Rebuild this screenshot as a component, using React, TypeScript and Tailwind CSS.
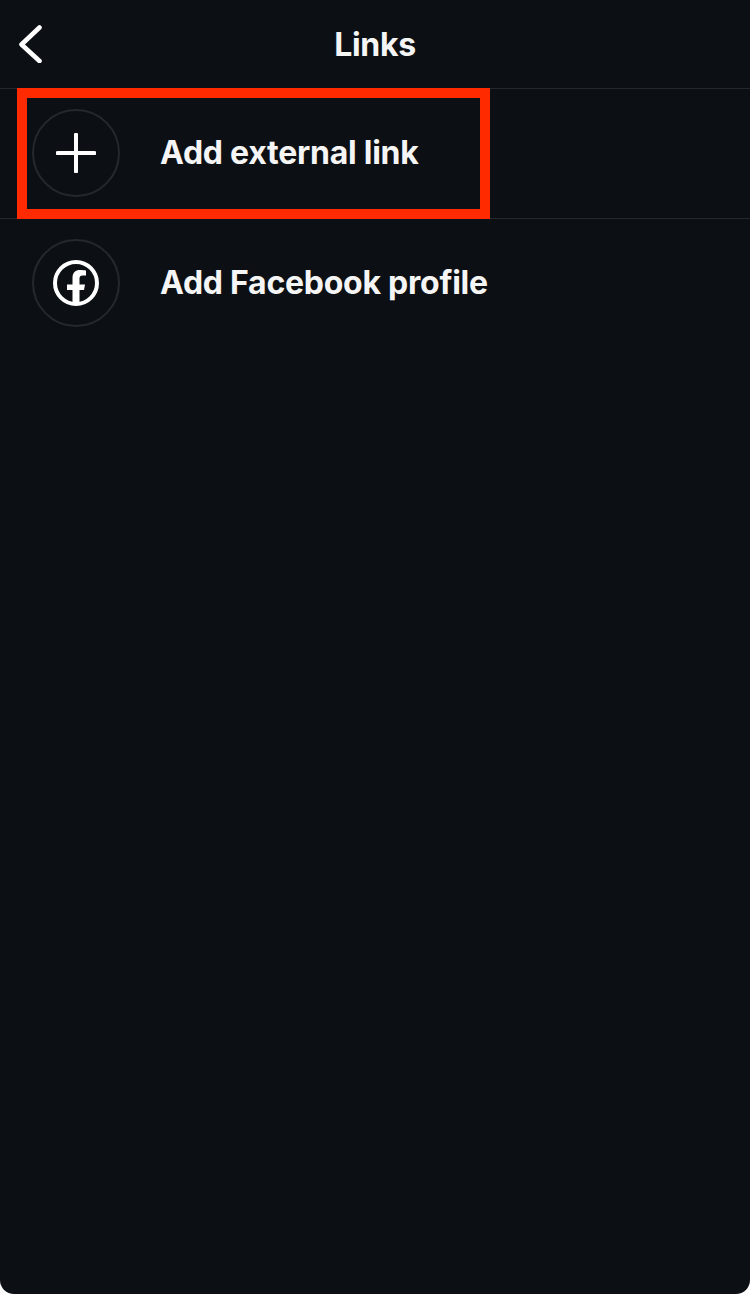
export default function App() {
  const Row = ({ icon, label, divider }: { icon: React.ReactNode; label: string; divider?: boolean }) => (
    <div className={divider ? "flex h-[130px] items-center border-b border-[#24272b] pb-[1px] pl-8" : "flex h-[130px] items-center pb-[2px] pl-8"}>
      <div className="flex h-[88px] w-[88px] shrink-0 items-center justify-center rounded-full border-2 border-[#25282c]">
        {icon}
      </div>
      <span className="ml-[40px] text-[32px] font-bold leading-none tracking-[-0.25px] text-[#f5f5f5]">{label}</span>
    </div>
  );
  return (
    <div className="h-[1294px] w-[750px] bg-white">
      <div className="relative h-[1294px] w-[750px] overflow-hidden rounded-b-[14px] bg-[#0c1014] [font-family:Inter,'Liberation_Sans',sans-serif]">
        <header className="relative flex h-[89px] items-center justify-center border-b border-[#24272b] pt-[2px]">
          <svg className="absolute left-[18px] top-[25px]" width="24" height="38" viewBox="0 0 24 38" fill="none">
            <path d="M21.5 2.5 L3.5 19.5 L21.5 36" stroke="#fff" strokeWidth="4.6" strokeLinecap="round" strokeLinejoin="round" />
          </svg>
          <h1 className="text-[32px] font-bold leading-none tracking-[-0.35px] text-[#f5f5f5]">Links</h1>
        </header>
        <Row
          divider
          label="Add external link"
          icon={
            <svg width="40" height="40" viewBox="0 0 40 40" fill="none">
              <path d="M20 1.5V38.5M1.5 20H38.5" stroke="#fff" strokeWidth="4" strokeLinecap="round" />
            </svg>
          }
        />
        <Row
          label="Add Facebook profile"
          icon={
            <svg width="46" height="46" viewBox="0 0 46 46" fill="none">
              <circle cx="23" cy="23" r="21" stroke="#fff" strokeWidth="4" />
              <path d="M19.5 44V30H14V24.5H19.5V18C19.5 12.5 22.5 10 27 10C29.5 10 33 10.5 33 10.5V15.5H29.5C27.5 15.5 26.5 16.5 26.5 18.5V24.5H32L31 30H26.5V44Z" fill="#fff" />
            </svg>
          }
        />
        <div className="absolute left-[17px] top-[88px] h-[131px] w-[473px] border-[10px] border-[#ff2a00]" />
      </div>
    </div>
  );
}
